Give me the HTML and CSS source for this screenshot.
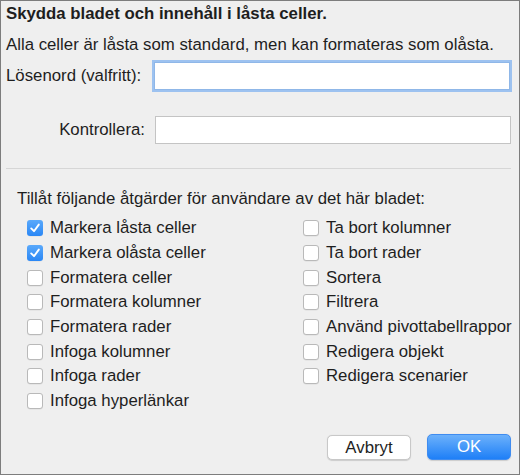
FILE: index.html
```html
<!DOCTYPE html>
<html lang="sv">
<head>
<meta charset="utf-8">
<link rel="stylesheet" href="styles.css">
</head>
<body>
<div class="dialog">
  <div class="title">Skydda bladet och innehåll i låsta celler.</div>
  <div class="desc">Alla celler är låsta som standard, men kan formateras som olåsta.</div>
  <div class="pwrow">
    <label class="lbl">Lösenord (valfritt):</label>
    <div class="input focus"></div>
  </div>
  <div class="pwrow verify">
    <label class="lbl right">Kontrollera:</label>
    <div class="input"></div>
  </div>
  <div class="sep"></div>
  <div class="allow">Tillåt följande åtgärder för användare av det här bladet:</div>
  <div class="grid">
    <div class="col">
      <div class="cb"><span class="box on"><svg viewBox="0 0 16 16"><path d="M4.2 8.4 L7 11.2 L11.8 4.6"/></svg></span>Markera låsta celler</div>
      <div class="cb"><span class="box on"><svg viewBox="0 0 16 16"><path d="M4.2 8.4 L7 11.2 L11.8 4.6"/></svg></span>Markera olåsta celler</div>
      <div class="cb"><span class="box"></span>Formatera celler</div>
      <div class="cb"><span class="box"></span>Formatera kolumner</div>
      <div class="cb"><span class="box"></span>Formatera rader</div>
      <div class="cb"><span class="box"></span>Infoga kolumner</div>
      <div class="cb"><span class="box"></span>Infoga rader</div>
      <div class="cb"><span class="box"></span>Infoga hyperlänkar</div>
    </div>
    <div class="col">
      <div class="cb"><span class="box"></span>Ta bort kolumner</div>
      <div class="cb"><span class="box"></span>Ta bort rader</div>
      <div class="cb"><span class="box"></span>Sortera</div>
      <div class="cb"><span class="box"></span>Filtrera</div>
      <div class="cb"><span class="box"></span>Använd pivottabellrappor</div>
      <div class="cb"><span class="box"></span>Redigera objekt</div>
      <div class="cb"><span class="box"></span>Redigera scenarier</div>
    </div>
  </div>
  <div class="buttons">
    <button class="btn">Avbryt</button>
    <button class="btn primary">OK</button>
  </div>
</div>
</body>
</html>
```
FILE: styles.css
```css
html, body {
  margin: 0;
  padding: 0;
  background: #ececec;
}
.dialog {
  width: 520px;
  height: 475px;
  box-sizing: border-box;
  border: 1px solid #7d7d7d;
  background: #efefef;
  font-family: "Liberation Sans", Arial, sans-serif;
  font-size: 16.8px;
  color: #1e1e1e;
  padding: 3px 8px 0 5px;
  display: flex;
  flex-direction: column;
  overflow: hidden;
}
.title {
  font-weight: bold;
  font-size: 16.8px;
  height: 19px;
  line-height: 19px;
}
.desc {
  margin-top: 12px;
  height: 19px;
  line-height: 19px;
}
.pwrow {
  margin-top: 7px;
  display: flex;
  align-items: center;
  height: 30px;
}
.pwrow .lbl {
  width: 146px;
  white-space: nowrap;
}
.pwrow .lbl.right {
  text-align: right;
  width: 139px;
  padding-right: 10px;
}
.input {
  flex: 1;
  height: 27px;
  background: #fff;
  border: 1px solid #c4c4c4;
  box-sizing: border-box;
}
.input.focus {
  height: 28px;
  border: 1px solid #8fb7e8;
  box-shadow: 0 0 0 2px #9dc2f0;
  margin-left: 2px;
  margin-right: 1px;
}
.verify {
  margin-top: 25px;
  height: 28px;
}
.verify .input {
  height: 28px;
}
.sep {
  margin-top: 24px;
  height: 1px;
  background: #d6d6d6;
}
.allow {
  margin-top: 20px;
  margin-left: 11px;
  height: 19px;
  line-height: 19px;
}
.grid {
  margin-top: 8px;
  margin-left: 21px;
  display: grid;
  grid-template-columns: 276px 1fr;
}
.col {
  display: flex;
  flex-direction: column;
}
.cb {
  display: flex;
  align-items: center;
  height: 24.7px;
  white-space: nowrap;
}
.box {
  width: 16px;
  height: 16px;
  box-sizing: border-box;
  border: 1px solid #b9b9b9;
  border-radius: 3px;
  background: #fff;
  margin-right: 7px;
  flex: none;
  display: flex;
  align-items: center;
  justify-content: center;
  box-shadow: 0 0.5px 0.5px rgba(0,0,0,0.08);
}
.box.on {
  border: none;
  background: linear-gradient(#5aa9fb, #2a87f5);
}
.box svg {
  width: 16px;
  height: 16px;
}
.box svg path {
  fill: none;
  stroke: #fff;
  stroke-width: 1.9;
  stroke-linecap: round;
  stroke-linejoin: round;
}
.buttons {
  margin-top: auto;
  margin-bottom: 14px;
  display: flex;
  justify-content: flex-end;
  align-items: flex-end;
  gap: 16px;
}
.btn {
  font-family: "Liberation Sans", Arial, sans-serif;
  font-size: 16.8px;
  height: 25px;
  border-radius: 5px;
  border: 1px solid #c8c8c8;
  background: #fff;
  color: #1e1e1e;
  width: 84px;
  padding: 0;
  box-shadow: 0 0.5px 1px rgba(0,0,0,0.15);
}
.btn.primary {
  width: 84px;
  height: 26px;
  border: 1px solid #3f8cf0;
  background: linear-gradient(#6cb1fb, #1e7ff7);
  color: #fff;
}
```
